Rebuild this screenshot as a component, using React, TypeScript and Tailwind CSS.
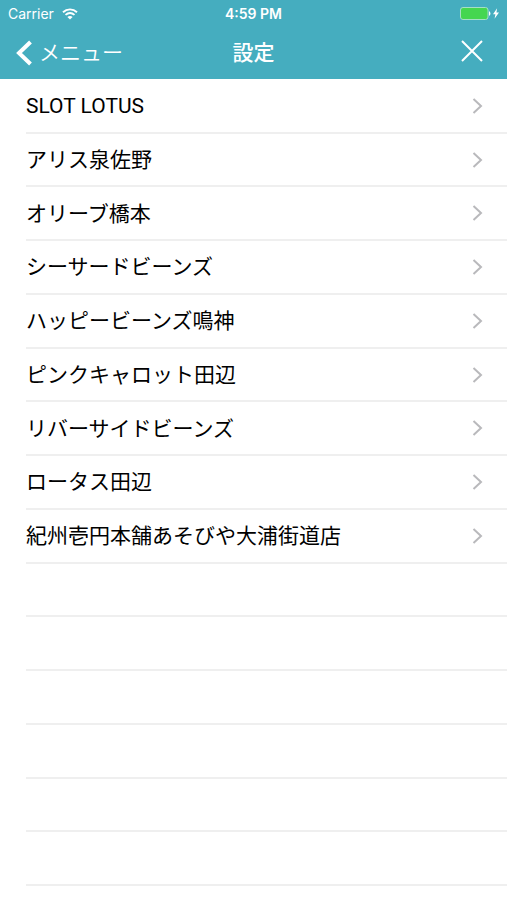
import React from 'react';

const shops = [
  'SLOT LOTUS',
  'アリス泉佐野',
  'オリーブ橋本',
  'シーサードビーンズ',
  'ハッピービーンズ鳴神',
  'ピンクキャロット田辺',
  'リバーサイドビーンズ',
  'ロータス田辺',
  '紀州壱円本舗あそびや大浦街道店',
];

// blank rows that fill the rest of the table
const emptyRows = [1, 2, 3, 4, 5, 6];

const StatusBar = () => {
  return (
    <div className="grid h-[27px] grid-cols-3 items-center px-2 text-[14px]">
      <div className="flex items-center gap-2">
        <span>Carrier</span>
        <svg width="16" height="12" viewBox="0 0 16 12" fill="none" stroke="currentColor" strokeWidth="1.9">
          <path d="M1 4.2C5 .4 11 .4 15 4.2" />
          <path d="M3.5 6.9c2.7-2.4 6.3-2.4 9 0" />
          <path d="M8 11.6 5.4 9c1.5-1.3 3.7-1.3 5.2 0z" fill="currentColor" stroke="none" />
        </svg>
      </div>
      <span className="text-center font-semibold">4:59 PM</span>
      <div className="flex items-center justify-end gap-0.5">
        <svg width="31" height="13" viewBox="0 0 31 13">
          <rect x="0.5" y="0.5" width="27.5" height="12" rx="2.5" fill="#45d650" stroke="#a5dfc6" />
          <path d="M29 4.2c1.9.6 1.9 4 0 4.6z" fill="#fff" />
        </svg>
        <svg width="6" height="11" viewBox="0 0 7 12" fill="#fff">
          <path d="M4.8 0 0 6.8h2.8L1.8 12 7 4.9H4z" />
        </svg>
      </div>
    </div>
  );
};

const App = () => {
  return (
    <div className="flex min-h-screen flex-col bg-white font-['Inter','Noto_Sans_CJK_JP',sans-serif]">
      {/* Header */}
      <header className="bg-[#45adbf] text-white">
        <StatusBar />
        <nav className="grid h-[52px] grid-cols-3 items-center px-4 text-[21px]">
          <button className="flex items-center gap-1.5 justify-self-start font-[350]">
            <svg width="17" height="26" viewBox="0 0 17 26" fill="none" stroke="currentColor" strokeWidth="4">
              <path d="M14.5 2 3 13l11.5 11" />
            </svg>
            メニュー
          </button>
          <h1 className="text-center font-medium">設定</h1>
          <button aria-label="閉じる" className="mr-2 justify-self-end pb-1">
            <svg width="22" height="22" viewBox="0 0 22 22" fill="none" stroke="currentColor" strokeWidth="2">
              <path d="M1 1l20 20M21 1 1 21" />
            </svg>
          </button>
        </nav>
      </header>

      {/* Shop list */}
      <ul className="grid flex-1 auto-rows-fr pt-px pb-[14px] pl-[26px] font-['Roboto','Noto_Sans_CJK_JP',sans-serif] text-[21px] text-black">
        {shops.map((shop) => (
          <li key={shop} className="border-b-2 border-[#efefef]">
            <button className="flex h-full w-full items-center justify-between pr-6 text-left">
              <span className="pt-0.5">{shop}</span>
              <svg width="11" height="16" viewBox="0 0 11 16" fill="none" stroke="#b9b9bc" strokeWidth="2">
                <path d="M1.5 1 9 8l-7.5 7" />
              </svg>
            </button>
          </li>
        ))}
        {emptyRows.map((row) => (
          <li key={row} className="border-b-2 border-[#efefef]" />
        ))}
      </ul>
    </div>
  );
};

export default App;
